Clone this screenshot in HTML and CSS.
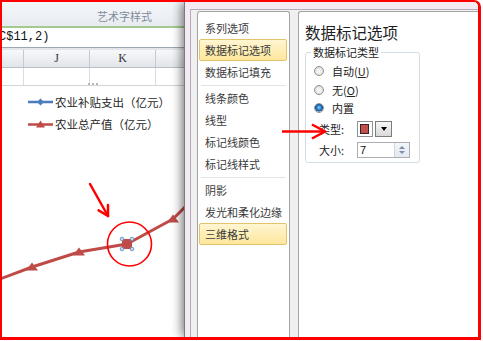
FILE: index.html
```html
<!DOCTYPE html>
<html lang="zh">
<head>
<meta charset="utf-8">
<title>数据标记选项</title>
<link rel="stylesheet" href="styles.css">
</head>
<body>
<div class="frame">
  <div class="sheet">
    <div class="ribbon"><span class="ribbon-label">艺术字样式</span></div>
    <div class="formula">C$11,2)</div>
    <div class="grid head">
      <div class="cell"></div><div class="cell">J</div><div class="cell">K</div><div class="cell last"></div>
    </div>
    <div class="grid body-row">
      <div class="cell"></div><div class="cell"></div><div class="cell"></div><div class="cell last"></div>
    </div>
    <div class="chart">
      <span class="handle"></span>
      <div class="legend">
        <div class="legend-item">
          <svg class="key" width="25" height="10" viewBox="0 0 25 10"><line x1="0" y1="5" x2="25" y2="5" stroke="#4a7ebb" stroke-width="2.5"/><polygon points="12.5,1.5 16,5 12.5,8.5 9,5" fill="#4a7ebb"/></svg>
          <span>农业补贴支出（亿元）</span>
        </div>
        <div class="legend-item">
          <svg class="key" width="25" height="10" viewBox="0 0 25 10"><line x1="0" y1="5.5" x2="25" y2="5.5" stroke="#be4b48" stroke-width="2.5"/><polygon points="12.5,1.5 17,8.5 8,8.5" fill="#be4b48"/></svg>
          <span>农业总产值（亿元）</span>
        </div>
      </div>
      <svg class="plot" width="183" height="250" viewBox="0 0 183 250">
        <polyline points="-2,193 30,181 77,166 125,158 171,133 192,112" fill="none" stroke="#be4b48" stroke-width="3" stroke-linejoin="round"/>
        <polygon points="30,176.5 36,184.5 24,184.5" fill="#be4b48"/>
        <polygon points="77,161.5 83,169.5 71,169.5" fill="#be4b48"/>
        <polygon points="171,128.5 177,136.5 165,136.5" fill="#be4b48"/>
        <rect x="120" y="153" width="10" height="10" fill="#be4b48"/>
        <g fill="#c8d7eb" stroke="#6e8fbd" stroke-width="0.9">
          <circle cx="120" cy="153" r="1.8"/>
          <circle cx="130" cy="153" r="1.8"/>
          <circle cx="120" cy="163" r="1.8"/>
          <circle cx="130" cy="163" r="1.8"/>
        </g>
        <circle cx="127.5" cy="158" r="22" fill="none" stroke="#ff0000" stroke-width="1.6"/>
        <line x1="88" y1="98" x2="106" y2="130" stroke="#ff0000" stroke-width="2.5" stroke-linecap="round"/>
        <polyline points="96.6,124.4 106,130 106,119" fill="none" stroke="#ff0000" stroke-width="2.5" stroke-linecap="round" stroke-linejoin="round"/>
      </svg>
    </div>
  </div>

  <div class="dialog">
    <div class="dialog-body">
      <ul class="nav">
        <li>系列选项</li>
        <li class="sel">数据标记选项</li>
        <li>数据标记填充</li>
        <li class="sep"></li>
        <li>线条颜色</li>
        <li>线型</li>
        <li>标记线颜色</li>
        <li>标记线样式</li>
        <li class="sep"></li>
        <li>阴影</li>
        <li>发光和柔化边缘</li>
        <li class="sel">三维格式</li>
      </ul>
      <div class="panel">
        <h1 class="title">数据标记选项</h1>
        <fieldset class="group">
          <legend>数据标记类型</legend>
          <div class="opt"><span class="radio"></span><span>自动(<u>U</u>)</span></div>
          <div class="opt"><span class="radio"></span><span>无(<u>O</u>)</span></div>
          <div class="opt"><span class="radio on"></span><span>内置</span></div>
          <div class="field">
            <span class="lbl">类型:</span>
            <span class="swatch"><span class="chip"></span></span>
            <span class="drop"><span class="tri"></span></span>
          </div>
          <div class="field size">
            <span class="lbl">大小:</span>
            <span class="num"><span class="val">7</span><span class="spin"><span class="up"></span><span class="down"></span></span></span>
          </div>
        </fieldset>
      </div>
    </div>
  </div>

  <svg class="note-arrow" width="50" height="24" viewBox="0 0 50 24">
    <line x1="2" y1="11.5" x2="45" y2="11.5" stroke="#ff0000" stroke-width="2.5"/>
    <polyline points="32,4.5 45,11.5 32,18.5" fill="none" stroke="#ff0000" stroke-width="2.5" stroke-linejoin="miter"/>
  </svg>
</div>
</body>
</html>
```

FILE: styles.css
```css
html, body {
  margin: 0;
  padding: 0;
  background: #ffffff;
}
body {
  width: 483px;
  height: 341px;
  overflow: hidden;
  font-family: "Noto Sans CJK SC", "Noto Sans", sans-serif;
}
.frame {
  position: relative;
  box-sizing: border-box;
  width: 481px;
  height: 340px;
  border: solid #ff0000;
  border-width: 2px 3px 3px 2px;
  border-top-right-radius: 7px;
  display: flex;
  overflow: hidden;
  background: #fff;
}

/* spreadsheet */
.sheet {
  width: 183px;
  flex-shrink: 0;
  display: flex;
  flex-direction: column;
}
.ribbon {
  height: 20px;
  padding: 4px 0 0 95px;
  background: linear-gradient(#f4f6f9, #e8ecf1);
  border-bottom: 2px solid #a2cc8f;
  display: flex;
  align-items: center;
}
.ribbon-label {
  font-size: 11px;
  color: #7f8b99;
  white-space: nowrap;
}
.formula {
  height: 19px;
  line-height: 19px;
  background: #fff;
  font-family: "Liberation Mono", monospace;
  font-size: 12px;
  color: #111;
  text-indent: -3px;
  white-space: nowrap;
  border-bottom: 1px solid #9ea7b1;
}
.grid {
  display: grid;
  grid-template-columns: 22px 66px 66px 1fr;
}
.head {
  height: 17px;
  border-top: 2px solid #e2e6eb;
  border-bottom: 1px solid #b8bec6;
  background: linear-gradient(#f7f8fa, #e2e5e9);
}
.head .cell {
  border-right: 1px solid #c4cad2;
  font-family: "Liberation Serif", serif;
  font-size: 12px;
  line-height: 17px;
  color: #333;
  text-align: center;
}
.body-row {
  height: 17px;
  background: #fff;
}
.body-row .cell {
  border-right: 1px solid #dadcdf;
}
.grid .cell.last {
  border-right: none;
}
.chart {
  flex: 1;
  position: relative;
  border-top: 1px solid #d4d4d4;
  padding: 5px 0 0 26px;
}
.handle {
  position: absolute;
  left: 86px;
  top: -3px;
  width: 10px;
  height: 0;
  border-top: 2px dotted #b8b8b8;
}
.legend {
  position: relative;
  z-index: 1;
}
.legend-item {
  height: 22px;
  display: flex;
  align-items: center;
  font-size: 11.5px;
  color: #262626;
  white-space: nowrap;
}
.key {
  margin-right: 2px;
  flex-shrink: 0;
}
.plot {
  position: absolute;
  left: 0;
  top: 0;
  overflow: visible;
}

/* dialog */
.dialog {
  flex: 1;
  position: relative;
  z-index: 1;
  display: flex;
  padding: 7px 0 0 5px;
  background: #f4eaf3;
  box-shadow: -1px 0 0 #7a7a7a, -3px 0 10px rgba(0, 0, 0, 0.55);
}
.dialog-body {
  flex: 1;
  display: flex;
  padding: 1px 0 0 6px;
  background: #f0f0f0;
  border-top: 1px solid #b4abbd;
  border-left: 1px solid #b4abbd;
}
.nav {
  width: 91px;
  margin: 0 8px 0 0;
  padding: 5px 0 0 0;
  list-style: none;
  background: #fff;
  border: 1px solid #a4a4a4;
  border-bottom: none;
  border-radius: 3px 3px 0 0;
}
.nav li {
  box-sizing: border-box;
  height: 22px;
  line-height: 20px;
  margin: 0 2px 0 1px;
  padding-left: 5px;
  border: 1px solid transparent;
  border-radius: 2px;
  font-size: 11px;
  color: #3a3a3a;
  white-space: nowrap;
}
.nav li.sel {
  border-color: #e4c46a;
  background: linear-gradient(#fff6d2, #fde79c);
}
.nav li.sep {
  height: 4px;
  border: none;
  margin: 0 3px;
  background: linear-gradient(#e3e3e3, #e3e3e3) center / 100% 1px no-repeat;
}
.panel {
  flex: 1;
  padding: 10px 0 0 6px;
  background: #fff;
  border: 1px solid #a4a4a4;
  border-right: none;
  border-bottom: none;
  border-radius: 3px 0 0 0;
}
.title {
  margin: 0;
  font-size: 15.5px;
  font-weight: normal;
  line-height: 20px;
  color: #1e1e1e;
  white-space: nowrap;
}
.group {
  box-sizing: border-box;
  width: 115px;
  margin: 3px 0 0 0;
  padding: 3px 0 3px 8px;
  border: 1px solid #d3dde4;
  border-radius: 3px;
}
.group legend {
  margin-left: -3px;
  padding: 0 2px;
  font-size: 11px;
  line-height: 14px;
  color: #222;
}
.opt {
  height: 18.5px;
  display: flex;
  align-items: center;
  gap: 8px;
  font-size: 11px;
  color: #222;
}
.opt u {
  text-decoration: underline;
}
.radio {
  box-sizing: border-box;
  width: 10px;
  height: 10px;
  border: 1px solid #909090;
  border-radius: 50%;
  background: radial-gradient(circle at 50% 55%, #fbfbfb 0, #e6e6e6 55%, #cfcfcf 100%);
  flex-shrink: 0;
}
.radio.on {
  background: radial-gradient(circle at 50% 45%, #8fd0ff 0, #2a86d6 35%, #144f8f 62%, #d8d8d8 70%, #cfcfcf 100%);
}
.field {
  height: 18px;
  margin-top: 2px;
  padding-left: 5px;
  display: flex;
  align-items: center;
  font-size: 11px;
  color: #222;
}
.field.size {
  margin-top: 3px;
}
.lbl {
  width: 38px;
  flex-shrink: 0;
}
.swatch {
  box-sizing: border-box;
  width: 16px;
  height: 16px;
  padding: 2px 0 0 2px;
  border: 1px solid #8a929a;
  background: #fff;
}
.chip {
  display: block;
  box-sizing: border-box;
  width: 9px;
  height: 10px;
  background: #c0504d;
  border: 1px solid #3b2020;
}
.drop {
  box-sizing: border-box;
  width: 17px;
  height: 16px;
  margin-left: 2px;
  border: 1px solid #7c7c7c;
  background: linear-gradient(#f7f7f7, #d9d9d9);
  display: flex;
  align-items: center;
  justify-content: center;
}
.tri {
  width: 0;
  height: 0;
  border-left: 3.5px solid transparent;
  border-right: 3.5px solid transparent;
  border-top: 4px solid #000;
}
.num {
  box-sizing: border-box;
  width: 53px;
  height: 16px;
  border: 1px solid #abadb3;
  display: flex;
  align-items: stretch;
  background: #fff;
}
.val {
  padding-left: 2px;
  font-family: "Liberation Sans", sans-serif;
  font-size: 11px;
  line-height: 14px;
  color: #111;
}
.spin {
  margin-left: auto;
  width: 14px;
  border-left: 1px solid #cfd6df;
  background: linear-gradient(#f3f6fa, #e3e9f0);
  display: flex;
  flex-direction: column;
  align-items: center;
  justify-content: center;
  gap: 2px;
}
.up, .down {
  width: 0;
  height: 0;
  border-left: 3px solid transparent;
  border-right: 3px solid transparent;
}
.up {
  border-bottom: 3px solid #7b8ea6;
}
.down {
  border-top: 3px solid #7b8ea6;
}

/* annotation arrow over the dialog */
.note-arrow {
  position: absolute;
  left: 278px;
  top: 118px;
  z-index: 2;
}
```
